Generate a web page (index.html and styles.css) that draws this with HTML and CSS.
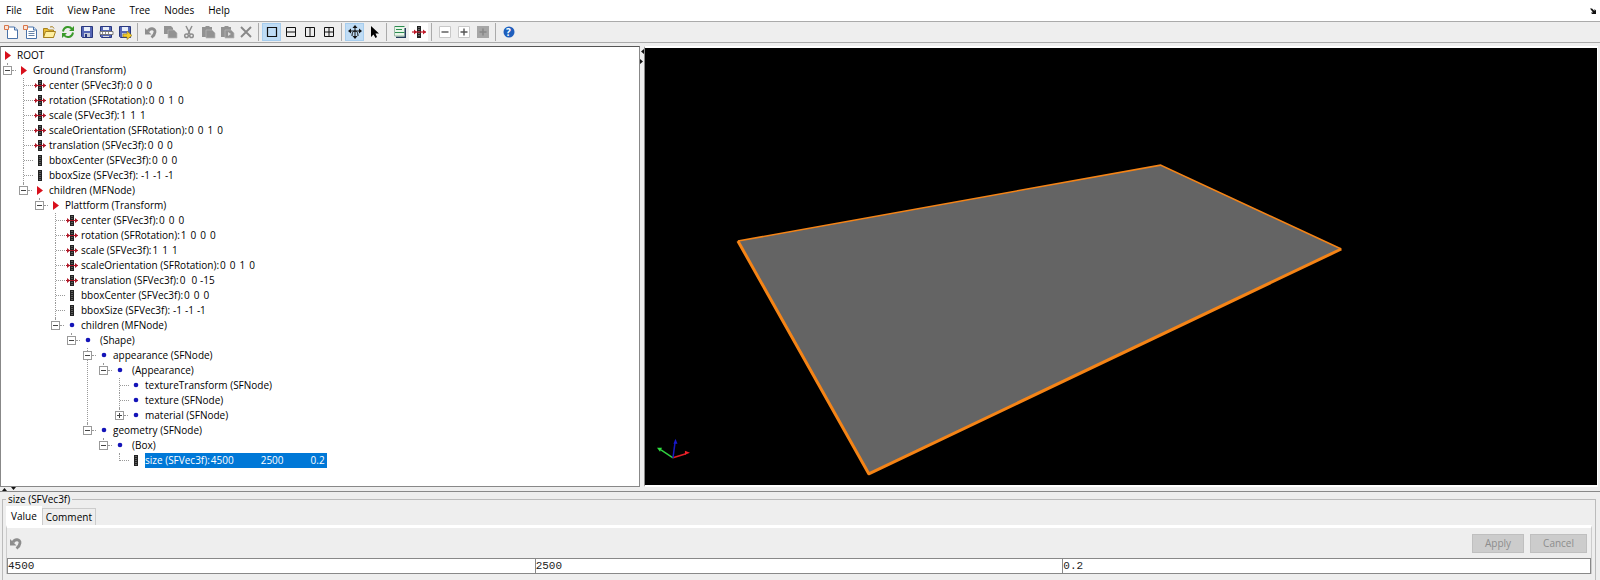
FILE: index.html
```html
<!DOCTYPE html>
<html lang="en">
<head>
<meta charset="utf-8">
<title>Scene Editor</title>
<link rel="stylesheet" href="styles.css">
</head>
<body>
<svg class="defs" aria-hidden="true">
  <symbol id="arrow" viewBox="0 0 16 15"><path d="M4 3v9l6-4.500z" fill="#d8101c"/></symbol>
  <symbol id="dot" viewBox="0 0 16 15"><circle cx="7" cy="7" r="2.300" fill="#1414b8"/></symbol>
  <symbol id="field" viewBox="0 0 16 15"><path d="M5 2h4v11H5z" fill="#222"/><path d="M7 3v9" stroke="#999" stroke-dasharray="1 1"/></symbol>
  <symbol id="exposed" viewBox="0 0 16 15"><path d="M5 2h4v11H5z" fill="#222"/><path d="M7 3v9" stroke="#999" stroke-dasharray="1 1"/><path d="M1 7.500h12" stroke="#b01828"/><path d="M2 5l3 2.500L2 10zM10 5l3 2.500-3 2.500z" fill="#b01828"/></symbol>
  <symbol id="undo" viewBox="0 0 16 16"><path d="M5 7.500C6.500 3.500 12.500 4 12 8c-.3 2.500-1.500 4-3.500 5.500" fill="none" stroke="#8d8d8d" stroke-width="2.800"/><path d="M2 4v6.500h6.500z" fill="#8d8d8d"/></symbol>
</svg>

<nav class="menubar" aria-label="Main menu">
  <button>File</button><button>Edit</button><button>View Pane</button><button>Tree</button><button>Nodes</button><button>Help</button>
  <button class="dock" aria-label="Dock"><svg width="8" height="8" viewBox="0 0 8 8"><path d="M1 1.500h2L5.500 4V2L7 3.500V7H3L2 5.500h2z" fill="#111"/></svg></button>
</nav>

<div class="toolbar" role="toolbar" aria-label="Tools">
  <button aria-label="New"><svg viewBox="0 0 16 16"><path d="M4.500 3h7l3 3v8.500h-10z" fill="#fff" stroke="#4a72a8"/><path d="M11.500 3v3h3" fill="#cfe0f5" stroke="#4a72a8"/><path d="M1.500 1.500h4v4h-4z" fill="#fbe3d6" stroke="#d8764a"/></svg></button>
  <button aria-label="New from template"><svg viewBox="0 0 16 16"><path d="M4.500 3h7l3 3v8.500h-10z" fill="#fff" stroke="#4a72a8"/><path d="M11.500 3v3h3" fill="#cfe0f5" stroke="#4a72a8"/><path d="M1.500 1.500h4v4h-4z" fill="#fbe3d6" stroke="#d8764a"/><path d="M6.500 7.500h6M6.500 9.500h6M6.500 11.500h6" stroke="#6784a8"/></svg></button>
  <button aria-label="Open"><svg viewBox="0 0 16 16"><path d="M2.500 13.500v-9h4l1 1.500h5v7.500z" fill="#e8bd32" stroke="#a6801e"/><path d="M2.500 13.500l2-6h10l-2 6z" fill="#fff0a0" stroke="#a6801e"/><path d="M9 3q3-1.500 4 1.500" fill="none" stroke="#a6801e"/></svg></button>
  <button aria-label="Reload"><svg viewBox="0 0 16 16"><path d="M3 7.500C4 2 10 2 12 5M13 8.500C12 14 6 14 4 11" fill="none" stroke="#3a9a2a" stroke-width="2"/><path d="M14 2v5H9zM2 14V9h5z" fill="#3a9a2a"/></svg></button>
  <button aria-label="Save"><svg viewBox="0 0 16 16"><path d="M2.500 2.500h11v11h-10l-1-1z" fill="#5566b5" stroke="#29387e"/><path d="M5 3h6v4H5z" fill="#e8effa"/><path d="M5 9h6v4H5z" fill="#c5cbd8"/><path d="M6 10h2v3H6z" fill="#29387e"/></svg></button>
  <button aria-label="Save as"><svg viewBox="0 0 16 16"><path d="M2.500 2.500h11v11h-10l-1-1z" fill="#5566b5" stroke="#29387e"/><path d="M5 3h6v3H5z" fill="#e8effa"/><path d="M2 7.500h13v3H2z" fill="#fff" stroke="#777"/><path d="M4 9h1M7 9h1M10 9h1" stroke="#222"/><path d="M5 12h6v1H5z" fill="#ddd"/></svg></button>
  <button aria-label="Export"><svg viewBox="0 0 16 16"><path d="M2.500 2.500h11v11h-10l-1-1z" fill="#5566b5" stroke="#29387e"/><path d="M5 3h6v4H5z" fill="#e8effa"/><path d="M5 9h6v4H5z" fill="#c5cbd8"/><path d="M6 10h4V7l5 4.500-5 4V13H6z" fill="#f5cc28" stroke="#8a7420" stroke-width=".6"/></svg></button>
  <span class="sep"></span>
  <button aria-label="Undo"><svg viewBox="0 0 16 16"><use href="#undo"/></svg></button>
  <button aria-label="Copy all"><svg viewBox="0 0 16 16" fill="#929292"><path d="M2 2h7l2 2v6H2z"/><path d="M6 6h6l3 3v5H6z" stroke="#b8b8b8" stroke-width=".7"/></svg></button>
  <button aria-label="Cut"><svg viewBox="0 0 16 16" fill="none" stroke="#8d8d8d" stroke-width="1.500"><path d="M5 2l4 8M11 2L7 10"/><circle cx="5.500" cy="11.800" r="1.800"/><circle cx="10.500" cy="11.800" r="1.800"/></svg></button>
  <button aria-label="Paste"><svg viewBox="0 0 16 16" fill="#929292"><path d="M2 3h3l1-1h3l1 1h2v10H2z"/><path d="M6 6h6l3 3v5H6z" stroke="#b8b8b8" stroke-width=".7"/></svg></button>
  <button aria-label="Paste into"><svg viewBox="0 0 16 16" fill="#929292"><path d="M2 3h3l1-1h3l1 1h2v10H2z"/><path d="M6 6h6l3 3v5H6z" stroke="#b8b8b8" stroke-width=".7"/><path d="M9 8l3 2-3 2z" fill="#ddd"/></svg></button>
  <button aria-label="Delete"><svg viewBox="0 0 16 16"><path d="M3 3l10 10M13 3L3 13" stroke="#888" stroke-width="1.900"/></svg></button>
  <span class="sep"></span>
  <button class="on" aria-label="Single view"><svg viewBox="0 0 16 16"><path d="M3.500 3.500h9v9h-9z" fill="none" stroke="#111" stroke-width="1.200"/></svg></button>
  <button aria-label="Split rows"><svg viewBox="0 0 16 16"><path d="M3.500 3.500h9v9h-9zM3.500 8h9" fill="none" stroke="#111"/></svg></button>
  <button aria-label="Split columns"><svg viewBox="0 0 16 16"><path d="M3.500 3.500h9v9h-9zM8 3.500v9" fill="none" stroke="#111"/></svg></button>
  <button aria-label="Four views"><svg viewBox="0 0 16 16"><path d="M3.500 3.500h9v9h-9zM3.500 8h9M8 3.500v9" fill="none" stroke="#111"/></svg></button>
  <span class="sep"></span>
  <button class="on" aria-label="Navigate"><svg viewBox="0 0 16 16"><path d="M8 3v11M3 7h10M5 12q0-5 3-5t3 5" fill="none" stroke="#111"/><path d="M8 1l2.500 3h-5zM8 15l2.500-3h-5zM1 7l3-2.500v5zM15 7l-3-2.500v5z" fill="#111"/></svg></button>
  <button aria-label="Select"><svg viewBox="0 0 16 16"><path d="M5 2v11l2.500-2.500L9.500 14l1.500-1-1.500-3.500H13z" fill="#000"/></svg></button>
  <span class="sep"></span>
  <button aria-label="Properties"><svg viewBox="0 0 16 16"><path d="M4 4h10v10H4z" fill="#243c5a"/><path d="M2 2h10.500v10.500H2z" fill="#e8f6e8"/><path d="M2 2.500h10.500M4 5.500h6M2 8.500h10.500" stroke="#2c8c50"/><path d="M2.500 2v10h10" fill="none" stroke="#9ab8a6"/></svg></button>
  <button class="plain" aria-label="Fields"><svg viewBox="0 0 16 16"><path d="M6 2h4v12H6z" fill="#222"/><path d="M8 3v10" stroke="#aaa" stroke-dasharray="1 1"/><path d="M1 8h14" stroke="#c01828" stroke-width="1.200"/><path d="M3 5.500L6 8l-3 2.500zM12 5.500L15 8l-3 2.500z" fill="#c01828"/></svg></button>
  <span class="sep"></span>
  <button aria-label="Collapse"><svg viewBox="0 0 16 16"><path d="M2.500 2.500h11v11h-11z" fill="#fff" stroke="#c8c8c8"/><path d="M4.500 8h7" stroke="#555" stroke-width="1.400"/></svg></button>
  <button aria-label="Expand"><svg viewBox="0 0 16 16"><path d="M2.500 2.500h11v11h-11z" fill="#fff" stroke="#c8c8c8"/><path d="M4.500 8h7M8 4.500v7" stroke="#555" stroke-width="1.400"/></svg></button>
  <button aria-label="Expand all"><svg viewBox="0 0 16 16"><path d="M2 2h12v12H2z" fill="#a6a6a6"/><path d="M4.500 8h7M8 4.500v7" stroke="#888" stroke-width="1.500"/></svg></button>
  <span class="sep"></span>
  <button class="help" aria-label="Help"><svg viewBox="0 0 16 16"><circle cx="8" cy="8" r="5.500" fill="#1f5fbd"/></svg><b>?</b></button>
</div>

<main class="split">
  <section class="tree" aria-label="Scene tree">
    <div class="row"><svg><use href="#arrow"/></svg><span>ROOT</span></div>
    <ul>
      <li><div class="row"><button class="exp" aria-label="Collapse"></button><svg><use href="#arrow"/></svg><span>Ground (Transform)</span></div>
        <ul>
          <li><div class="row leaf"><svg><use href="#exposed"/></svg><span>center (SFVec3f):</span><i>0</i><i>0</i><i>0</i></div></li>
          <li><div class="row leaf"><svg><use href="#exposed"/></svg><span>rotation (SFRotation):</span><i>0</i><i>0</i><i>1</i><i>0</i></div></li>
          <li><div class="row leaf"><svg><use href="#exposed"/></svg><span>scale (SFVec3f):</span><i>1</i><i>1</i><i>1</i></div></li>
          <li><div class="row leaf"><svg><use href="#exposed"/></svg><span>scaleOrientation (SFRotation):</span><i>0</i><i>0</i><i>1</i><i>0</i></div></li>
          <li><div class="row leaf"><svg><use href="#exposed"/></svg><span>translation (SFVec3f):</span><i>0</i><i>0</i><i>0</i></div></li>
          <li><div class="row leaf"><svg><use href="#field"/></svg><span>bboxCenter (SFVec3f):</span><i>0</i><i>0</i><i>0</i></div></li>
          <li><div class="row leaf"><svg><use href="#field"/></svg><span>bboxSize (SFVec3f):</span><i class="neg">-1</i><i class="neg">-1</i><i class="neg">-1</i></div></li>
          <li><div class="row"><button class="exp" aria-label="Collapse"></button><svg><use href="#arrow"/></svg><span>children (MFNode)</span></div>
            <ul>
              <li><div class="row"><button class="exp" aria-label="Collapse"></button><svg><use href="#arrow"/></svg><span>Plattform (Transform)</span></div>
                <ul>
                  <li><div class="row leaf"><svg><use href="#exposed"/></svg><span>center (SFVec3f):</span><i>0</i><i>0</i><i>0</i></div></li>
                  <li><div class="row leaf"><svg><use href="#exposed"/></svg><span>rotation (SFRotation):</span><i>1</i><i>0</i><i>0</i><i>0</i></div></li>
                  <li><div class="row leaf"><svg><use href="#exposed"/></svg><span>scale (SFVec3f):</span><i>1</i><i>1</i><i>1</i></div></li>
                  <li><div class="row leaf"><svg><use href="#exposed"/></svg><span>scaleOrientation (SFRotation):</span><i>0</i><i>0</i><i>1</i><i>0</i></div></li>
                  <li><div class="row leaf"><svg><use href="#exposed"/></svg><span>translation (SFVec3f):</span><i>0</i><i class="far">0</i><i class="neg">-15</i></div></li>
                  <li><div class="row leaf"><svg><use href="#field"/></svg><span>bboxCenter (SFVec3f):</span><i>0</i><i>0</i><i>0</i></div></li>
                  <li><div class="row leaf"><svg><use href="#field"/></svg><span>bboxSize (SFVec3f):</span><i class="neg">-1</i><i class="neg">-1</i><i class="neg">-1</i></div></li>
                  <li><div class="row"><button class="exp" aria-label="Collapse"></button><svg><use href="#dot"/></svg><span>children (MFNode)</span></div>
                    <ul>
                      <li><div class="row anon"><button class="exp" aria-label="Collapse"></button><svg><use href="#dot"/></svg><span>(Shape)</span></div>
                        <ul>
                          <li><div class="row"><button class="exp" aria-label="Collapse"></button><svg><use href="#dot"/></svg><span>appearance (SFNode)</span></div>
                            <ul>
                              <li><div class="row anon"><button class="exp" aria-label="Collapse"></button><svg><use href="#dot"/></svg><span>(Appearance)</span></div>
                                <ul>
                                  <li><div class="row leaf"><svg><use href="#dot"/></svg><span>textureTransform (SFNode)</span></div></li>
                                  <li><div class="row leaf"><svg><use href="#dot"/></svg><span>texture (SFNode)</span></div></li>
                                  <li><div class="row"><button class="exp plus" aria-label="Expand"></button><svg><use href="#dot"/></svg><span>material (SFNode)</span></div></li>
                                </ul>
                              </li>
                            </ul>
                          </li>
                          <li><div class="row"><button class="exp" aria-label="Collapse"></button><svg><use href="#dot"/></svg><span>geometry (SFNode)</span></div>
                            <ul>
                              <li><div class="row anon"><button class="exp" aria-label="Collapse"></button><svg><use href="#dot"/></svg><span>(Box)</span></div>
                                <ul>
                                  <li><div class="row leaf"><svg><use href="#field"/></svg><div class="selected"><span>size (SFVec3f):</span><i>4500</i><i class="wide">2500</i><i class="wide">0.2</i></div></div></li>
                                </ul>
                              </li>
                            </ul>
                          </li>
                        </ul>
                      </li>
                    </ul>
                  </li>
                </ul>
              </li>
            </ul>
          </li>
        </ul>
      </li>
    </ul>
  </section>
  <div class="divider"><svg width="4" height="16" viewBox="0 0 4 16"><path d="M4 1v5L1 3.500zM0 11v5l3-2.500z" fill="#111"/></svg></div>
  <section class="viewport" aria-label="3D view">
    <svg viewBox="0 0 953 437" preserveAspectRatio="xMidYMid meet">
      <path d="M93 193L516 117 697 201 224 426z" fill="#646464"/>
      <path d="M93 193L516 117 697 201" fill="none" stroke="#f58416" stroke-width="1.600"/>
      <path d="M93 193L224 426 697 201" fill="none" stroke="#f58416" stroke-width="3" stroke-linejoin="round"/>
      <g fill="none" stroke-width="1.500"><path d="M28 410l-12-8" stroke="#30d040"/><path d="M28 410l13-4" stroke="#e02028"/><path d="M28 410l2-15" stroke="#1818c0"/></g>
      <path d="M12 400l5 0-2 4z" fill="#30e040"/><path d="M45 405l-5-2v4z" fill="#f02028"/><path d="M30.500 391l2 5h-4z" fill="#1818d0"/>
    </svg>
  </section>
</main>
<div class="hdivider"><svg width="16" height="4" viewBox="0 0 16 4"><path d="M0 4h5L2.500 1zM9 0h5l-2.500 3z" fill="#111"/></svg></div>

<section class="editor">
  <fieldset>
    <legend>size (SFVec3f)</legend>
    <div class="tabs" role="tablist"><button class="tab active" role="tab" aria-selected="true">Value</button><button class="tab" role="tab">Comment</button></div>
    <div class="panel">
      <div class="actions">
        <button class="revert" aria-label="Revert"><svg viewBox="0 0 16 16"><use href="#undo"/></svg></button>
        <button class="btn" disabled>Apply</button><button class="btn" disabled>Cancel</button>
      </div>
      <div class="fields"><input aria-label="X" value="4500"><input aria-label="Y" value="2500"><input aria-label="Z" value="0.2"></div>
    </div>
  </fieldset>
</section>
</body>
</html>
```
FILE: styles.css
```css
* { box-sizing: border-box; }
body {
  margin: 0;
  min-height: 100vh;
  display: flex;
  flex-direction: column;
  overflow: hidden;
  background: #eee;
  color: #000;
  font: 10px/15px "Open Sans", "Noto Sans", sans-serif;
}
button { font: inherit; color: inherit; border: 0; padding: 0; background: none; }
.defs { position: absolute; width: 0; height: 0; }

.menubar { display: flex; align-items: center; height: 21px; padding: 0 3px 0 6px; gap: 14px; background: #fff; }
.menubar .dock { display: flex; margin-left: auto; }

.toolbar { display: flex; align-items: center; height: 22px; padding-left: 1px; border-top: 1px solid #aaa; border-bottom: 1px solid #aaa; }
.toolbar button { position: relative; display: flex; align-items: center; justify-content: center; width: 19px; height: 18px; }
.toolbar svg { flex: none; width: 16px; height: 16px; }
.toolbar .on { background: #bfdcf5; border: 1px solid #a6cdee; }
.toolbar .plain { background: #fff; }
.sep { width: 1px; height: 18px; margin: 0 3px; background: #aaa; }
.help b { position: absolute; inset: 0; color: #fff; font-size: 10px; line-height: 18px; text-align: center; }

.split { display: flex; margin-top: 3px; }
.tree { flex: 0 0 40%; padding: 1px 0 18px; background: #fff; border: 1px solid #888; border-top-color: #555; }
.tree ul { list-style: none; margin: 0; padding: 0; }
.tree ul ul { padding-left: 16px; }
.tree li { position: relative; }
.tree li::before { content: ""; position: absolute; left: 6px; top: 0; bottom: 0; border-left: 1px dotted #999; }
.tree li:last-child::before { bottom: auto; height: 8px; }
.row { position: relative; display: flex; align-items: center; height: 15px; white-space: pre; }
.row svg { flex: none; width: 16px; height: 15px; }
.row i { font-style: normal; margin-left: 4px; }
.row .neg { margin-left: 3px; }
.row .far { margin-left: 6px; }
.row .wide { margin-left: 27px; }
.row span + i { margin-left: 1px; }
.anon svg { margin-right: 3px; }
.leaf::before { content: ""; width: 9px; margin-left: 7px; border-top: 1px dotted #999; }
.exp { position: relative; flex: none; width: 9px; height: 9px; margin: 0 5px 0 2px; border: 1px solid #999; background: linear-gradient(#444, #444) center / 5px 1px no-repeat #fff; }
.exp.plus { background: linear-gradient(#444, #444) center / 5px 1px no-repeat, linear-gradient(#444, #444) center / 1px 5px no-repeat #fff; }
.exp::after { content: ""; position: absolute; left: 8px; top: 3px; width: 4px; border-top: 1px dotted #999; }
.selected { display: flex; padding: 0 2px 0 0; background: #0078d7; color: #fff; }

.divider { flex: 0 0 4px; padding-top: 2px; }
.divider svg, .hdivider svg { display: block; }
.viewport { flex: 1; display: flex; margin-right: 2px; border: 1px solid #fff; border-top-width: 2px; border-bottom-width: 2px; border-left-color: #888; background: #000; }
.viewport svg { width: 100%; height: 437px; }
.hdivider { height: 5px; padding: 0 0 0 2px; border-bottom: 1px solid #888; }

.editor { flex: 1; display: flex; padding: 0 4px 0 2px; }
fieldset { flex: 1; min-width: 0; margin: 0; padding: 0 3px; border: 1px solid #bbb; border-bottom: 0; }
legend { padding: 0 2px; line-height: 14px; }
.tabs { display: flex; align-items: flex-end; height: 19px; }
.tab { height: 17px; padding: 1px 3px 0; border: 1px solid #ccc; border-bottom: 0; }
.tab.active { height: 19px; padding: 0 4px; background: #fff; border-color: #fff; }
.panel { border: 1px solid #ccc; border-top: 3px solid #fff; border-bottom: 0; }
.actions { display: flex; align-items: center; gap: 6px; height: 30px; padding: 0 4px 0 1px; }
.revert { display: flex; width: 16px; height: 16px; margin-right: auto; }
.btn { height: 19px; padding: 0 12px; border: 1px solid #bfbfbf; background: #ccc; color: #8c8c8c; }
.fields { display: flex; }
.fields input { flex: 1; min-width: 0; height: 16px; padding: 0; border: 1px solid #888; border-right: 0; border-radius: 0; background: #fff; color: #222; font: 11px/14px "Liberation Mono", monospace; }
.fields input:last-child { border-right: 1px solid #888; }
```
